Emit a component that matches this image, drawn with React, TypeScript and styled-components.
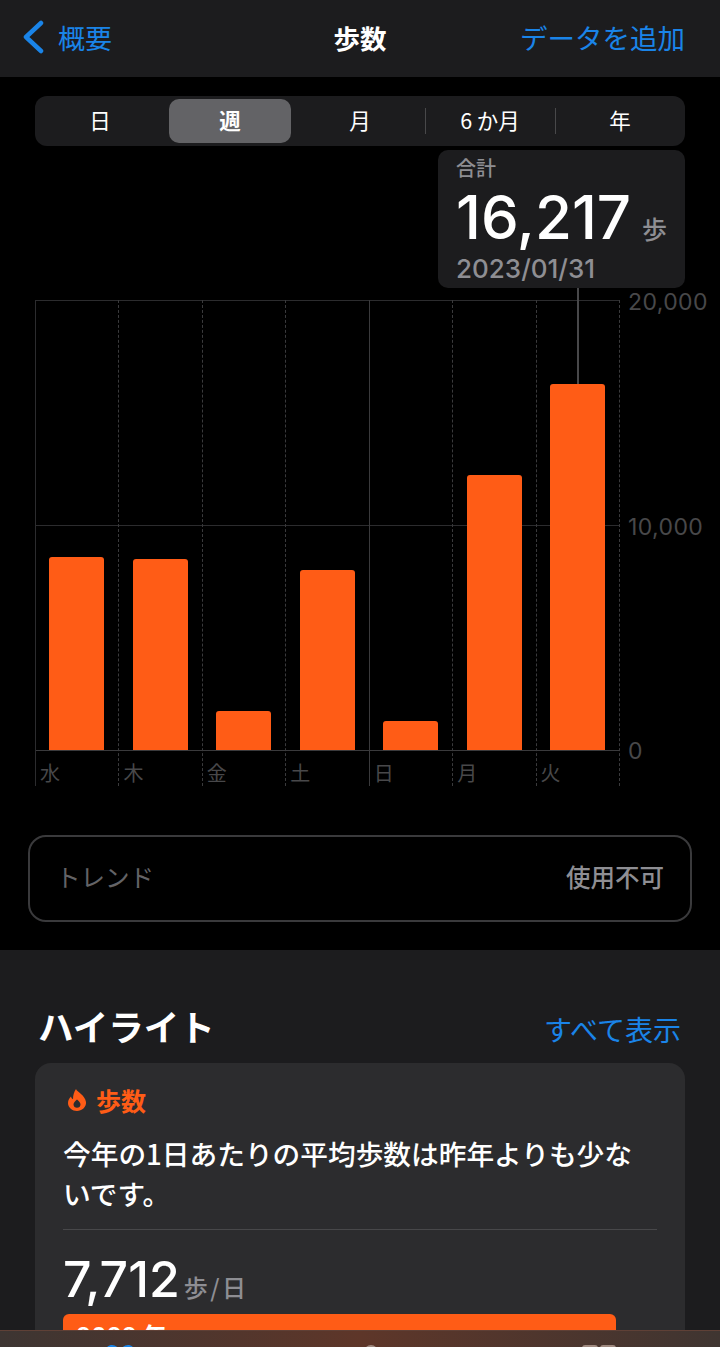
import React from 'react';
import styled, { createGlobalStyle } from 'styled-components';

const jp = `"Noto Sans CJK JP", "Noto Sans", sans-serif`;
const num = `Inter, "Noto Sans CJK JP", sans-serif`;
const ORANGE = '#ff5c16';
const BLUE = '#1a84e8';

const GlobalStyle = createGlobalStyle`
  html, body {
    margin: 0;
    background: #000;
  }
  * {
    box-sizing: border-box;
  }
`;

const Page = styled.div`
  position: relative;
  width: 720px;
  height: 1347px;
  overflow: hidden;
  background: #000;
  font-family: ${jp};
  color: #fff;
`;

const NavBar = styled.header`
  display: grid;
  grid-template-columns: 1fr auto 1fr;
  align-items: center;
  height: 77px;
  padding: 0 35px 3px;
  background: #1c1c1e;
`;

const BackLink = styled.div`
  display: flex;
  align-items: center;
  gap: 14px;
  margin-left: -13px;
  font-size: 27px;
  color: ${BLUE};
`;

const NavTitle = styled.div`
  font-size: 26.5px;
  font-weight: 700;
`;

const NavAction = styled.div`
  font-size: 27.5px;
  color: ${BLUE};
  text-align: right;
  white-space: nowrap;
`;

const Segments = styled.div`
  display: grid;
  grid-template-columns: repeat(5, 1fr);
  align-items: center;
  height: 50px;
  margin: 19px 35px 0;
  padding: 3px 0;
  border-radius: 12px;
  background: #1c1c1e;
`;

const Segment = styled.div<{ $active?: boolean; $divider?: boolean }>`
  position: relative;
  display: flex;
  align-items: center;
  justify-content: center;
  height: 44px;
  margin: 0 4px;
  padding-bottom: 4px;
  border-radius: 10px;
  font-size: 21.5px;
  font-weight: ${(p) => (p.$active ? 700 : 400)};
  background: ${(p) => (p.$active ? '#636366' : 'transparent')};

  ${(p) =>
    p.$divider &&
    `&::before {
      content: '';
      position: absolute;
      left: -4px;
      top: 9px;
      height: 26px;
      width: 1px;
      background: #48484a;
    }`}
`;

const TooltipRow = styled.div`
  display: flex;
  justify-content: flex-end;
  padding: 4px 35px 0 0;
`;

const Tooltip = styled.div`
  width: 247px;
  height: 138px;
  padding: 3px 18px 0;
  border-radius: 10px;
  background: #1c1c1e;
`;

const TooltipLabel = styled.div`
  font-size: 20px;
  line-height: 30px;
  font-weight: 500;
  color: #8e8e93;
`;

const TooltipValue = styled.div`
  display: flex;
  align-items: baseline;
  justify-content: space-between;
  height: 62px;
  margin-top: 3px;
  font-family: ${num};
  font-size: 60px;
  line-height: 62px;
  font-weight: 500;
`;

const TooltipUnit = styled.span`
  font-family: ${jp};
  font-size: 25px;
  font-weight: 500;
  color: #8e8e93;
`;

const TooltipDate = styled.div`
  margin-top: 6px;
  font-family: ${num};
  font-size: 26px;
  line-height: 30px;
  font-weight: 500;
  color: #8e8e93;
`;

const Chart = styled.div`
  position: relative;
  display: flex;
  margin: 12px 0 0 35px;
`;

const Pointer = styled.div`
  position: absolute;
  left: 542px;
  top: -12px;
  width: 2px;
  height: 96px;
  background: #48484a;
`;

const Plot = styled.div`
  width: 585px;
`;

const Columns = styled.div`
  display: grid;
  grid-template-columns: repeat(7, 1fr);
  height: 486px;
  border-left: 1px solid #2c2c2e;
`;

const Column = styled.div<{ $solid?: boolean }>`
  display: grid;
  grid-template-rows: 451px 35px;
  border-right: 1px ${(p) => (p.$solid ? 'solid' : 'dashed')} #3a3a3c;
`;

const BarArea = styled.div`
  display: flex;
  align-items: flex-end;
  padding-left: 13.45px;
  border-bottom: 1px solid #3a3a3c;
  background: linear-gradient(#2c2c2e, #2c2c2e) 0 0 / 100% 1px no-repeat,
    linear-gradient(#2c2c2e, #2c2c2e) 0 225px / 100% 1px no-repeat;
`;

const Bar = styled.div`
  width: 55px;
  border-radius: 3px 3px 0 0;
  background: ${ORANGE};
`;

const DayLabel = styled.div`
  padding: 7px 0 0 4px;
  font-size: 20px;
  line-height: 30px;
  color: #48484a;
`;

const YAxis = styled.div`
  display: flex;
  flex-direction: column;
  justify-content: space-between;
  height: 477px;
  margin: -12px 0 0 8px;
  font-family: ${num};
  font-size: 23px;
  line-height: 28px;
  letter-spacing: 0.4px;
  color: #48484a;
  white-space: nowrap;
`;

const TrendBox = styled.div`
  display: flex;
  align-items: center;
  justify-content: space-between;
  height: 87px;
  margin: 49px 28px 0;
  padding: 0 26px 5px;
  border: 2px solid #3a3a3c;
  border-radius: 18px;
  font-size: 24.5px;
  color: #636366;
`;

const TrendValue = styled.span`
  font-weight: 500;
  color: #8e8e93;
`;

const Section = styled.section`
  height: 397px;
  margin-top: 28px;
  padding: 50px 35px 0;
  background: #1c1c1e;
`;

const SectionHead = styled.div`
  display: flex;
  align-items: center;
  justify-content: space-between;
  height: 63px;
  padding: 0 4px 12px 3px;
`;

const SectionTitle = styled.h2`
  margin: 0;
  font-size: 35.5px;
  font-weight: 700;
`;

const SectionLink = styled.div`
  padding-top: 6px;
  font-size: 28px;
  color: ${BLUE};
`;

const Card = styled.div`
  height: 300px;
  padding: 19px 28px 0;
  border-radius: 16px;
  background: #2c2c2e;
`;

const CardKicker = styled.div`
  display: flex;
  align-items: center;
  gap: 9px;
  padding-left: 4px;
  font-size: 25px;
  line-height: 36px;
  font-weight: 700;
  color: ${ORANGE};
`;

const CardText = styled.p`
  margin: 15px 0 0;
  padding-bottom: 16px;
  border-bottom: 1px solid #48484a;
  font-size: 27.7px;
  line-height: 40px;
  font-weight: 500;
`;

const Stat = styled.div`
  display: flex;
  align-items: baseline;
  gap: 4px;
  margin-top: 18px;
  font-family: ${num};
  font-size: 50px;
  line-height: 62px;
  font-weight: 500;
`;

const StatUnit = styled.span`
  font-family: ${jp};
  font-size: 24px;
  letter-spacing: 2.5px;
  color: #8e8e93;
`;

const YearBar = styled.div`
  width: 553px;
  height: 60px;
  margin-top: -4px;
  padding: 8px 13px;
  border-radius: 6px;
  background: ${ORANGE};
  font-family: ${num};
  font-size: 24px;
  line-height: 30px;
  font-weight: 600;
`;

const TabBar = styled.nav`
  position: absolute;
  left: 0;
  right: 0;
  bottom: 0;
  display: flex;
  align-items: flex-start;
  height: 17px;
  padding: 14px 0 0 105px;
  overflow: hidden;
  border-top: 1px solid #5f4036;
  background: linear-gradient(90deg, #3d3532, #5e3629 50%, #3f3531);
`;

const TabIcon = styled.svg<{ $gap?: number }>`
  flex: none;
  margin-left: ${(p) => p.$gap ?? 0}px;
`;

const days = [
  { label: '水', height: 193 },
  { label: '木', height: 191 },
  { label: '金', height: 39 },
  { label: '土', height: 180 },
  { label: '日', height: 29 },
  { label: '月', height: 275 },
  { label: '火', height: 366 },
];

const BackChevron = () => (
  <svg width="22" height="34" viewBox="0 0 22 34">
    <path d="M19 3L4 17l15 14" fill="none" stroke={BLUE} strokeWidth="4.500" strokeLinecap="round" strokeLinejoin="round" />
  </svg>
);

const Flame = () => (
  <svg width="20" height="24" viewBox="0 0 20 24">
    <path
      fillRule="evenodd"
      fill={ORANGE}
      d="M9 1c1 3 9 6 10 13 .6 5-4.400 9-9 9s-9-3.500-9-8c0-3 1.500-5 3-6.500.3 1.500 1 2.300 2 2.800C6 7 7 4 9 1zM10 11.500c-2 1.500-3.500 3.200-3.500 5 0 2 1.500 3.300 3.500 3.300s3.500-1.300 3.500-3.300c0-1.800-1.500-3.500-3.500-5z"
    />
  </svg>
);

export default function App() {
  return (
    <Page>
      <GlobalStyle />
      <NavBar>
        <BackLink>
          <BackChevron />
          概要
        </BackLink>
        <NavTitle>歩数</NavTitle>
        <NavAction>データを追加</NavAction>
      </NavBar>

      <Segments>
        <Segment>日</Segment>
        <Segment $active>週</Segment>
        <Segment>月</Segment>
        <Segment $divider>6 か月</Segment>
        <Segment $divider>年</Segment>
      </Segments>

      <TooltipRow>
        <Tooltip>
          <TooltipLabel>合計</TooltipLabel>
          <TooltipValue>
            16,217
            <TooltipUnit>歩</TooltipUnit>
          </TooltipValue>
          <TooltipDate>2023/01/31</TooltipDate>
        </Tooltip>
      </TooltipRow>

      <Chart>
        <Pointer />
        <Plot>
          <Columns>
            {days.map((day, i) => (
              <Column key={day.label} $solid={i === 3}>
                <BarArea>
                  <Bar style={{ height: day.height }} />
                </BarArea>
                <DayLabel>{day.label}</DayLabel>
              </Column>
            ))}
          </Columns>
        </Plot>
        <YAxis>
          <span>20,000</span>
          <span>10,000</span>
          <span>0</span>
        </YAxis>
      </Chart>

      <TrendBox>
        <span>トレンド</span>
        <TrendValue>使用不可</TrendValue>
      </TrendBox>

      <Section>
        <SectionHead>
          <SectionTitle>ハイライト</SectionTitle>
          <SectionLink>すべて表示</SectionLink>
        </SectionHead>
        <Card>
          <CardKicker>
            <Flame />
            歩数
          </CardKicker>
          <CardText>今年の1日あたりの平均歩数は昨年よりも少ないです。</CardText>
          <Stat>
            7,712
            <StatUnit>歩/日</StatUnit>
          </Stat>
          <YearBar>2022 年</YearBar>
        </Card>
      </Section>

      <TabBar>
        <TabIcon width="30" height="12" viewBox="0 0 30 12">
          <path d="M15 5C13 2 10 0 7 0S1 2 0 6v6h30V6c-1-4-4-6-7-6s-6 2-8 5z" fill={BLUE} />
        </TabIcon>
        <TabIcon $gap={228} width="16" height="12" viewBox="0 0 16 12">
          <circle cx="8" cy="7" r="7" fill="#a08a80" />
        </TabIcon>
        <TabIcon $gap={203} width="35" height="12" viewBox="0 0 35 12">
          <rect x="0" y="0" width="16" height="12" rx="3" fill="#a08a80" />
          <rect x="18" y="0" width="16" height="12" rx="3" fill="#a08a80" />
        </TabIcon>
      </TabBar>
    </Page>
  );
}
